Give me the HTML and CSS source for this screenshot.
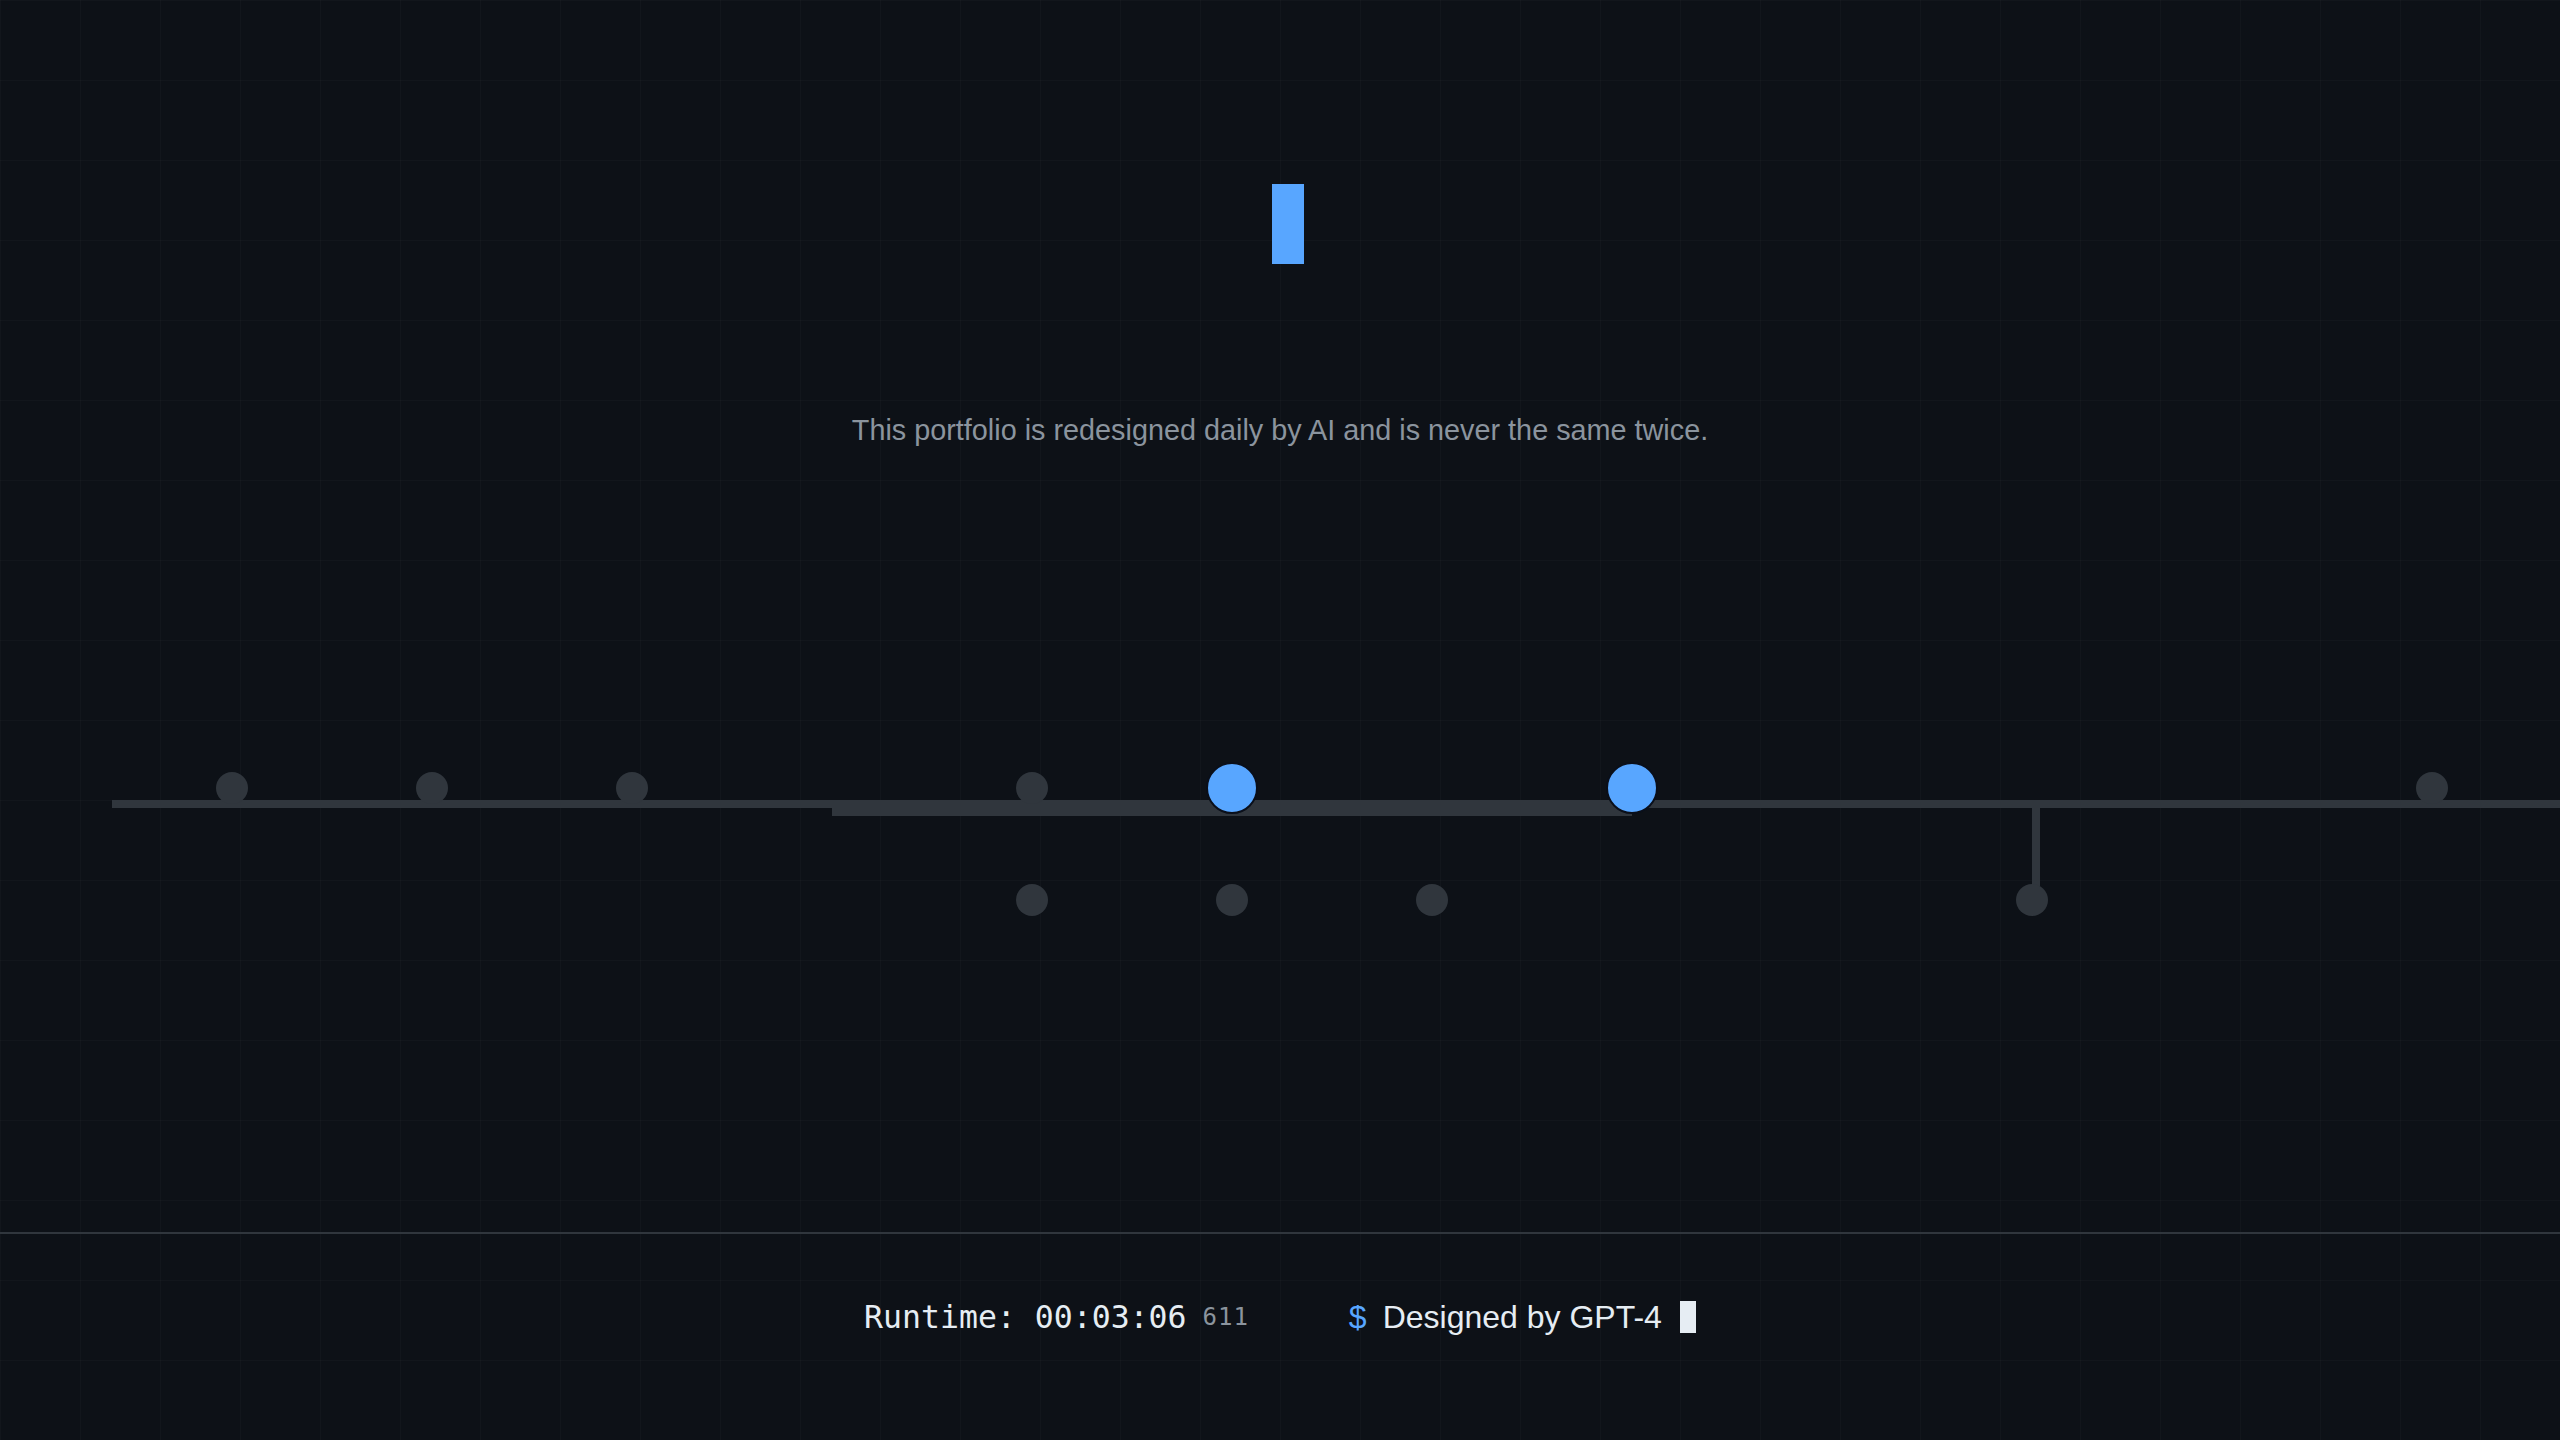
FILE: index.html
```html
<!DOCTYPE html>
<html lang="en">
<head>
<meta charset="utf-8">
<title>Portfolio</title>
<link rel="stylesheet" href="styles.css">
</head>
<body>
<main class="page">
  <header class="hero">
    <h1 class="title"><span class="title-cursor"></span></h1>
    <p class="subtitle">This portfolio is redesigned daily by AI and is never the same twice.</p>
  </header>
  <section class="timeline">
    <div class="line line-main"></div>
    <div class="line line-thick"></div>
    <div class="line line-branch"></div>
    <span class="node top c1"></span>
    <span class="node top c2"></span>
    <span class="node top c3"></span>
    <span class="node top c5"></span>
    <span class="node top c6 active"></span>
    <span class="node top c8 active"></span>
    <span class="node top c12"></span>
    <span class="node bottom c5"></span>
    <span class="node bottom c6"></span>
    <span class="node bottom c7"></span>
    <span class="node bottom c10"></span>
  </section>
</main>
<footer class="footer">
  <div class="runtime">
    <span class="runtime-time">Runtime: 00:03:06</span>
    <span class="runtime-ms">611</span>
  </div>
  <div class="credit">
    <span class="prompt">$</span>
    <span class="credit-text">Designed by GPT-4</span>
    <span class="term-cursor"></span>
  </div>
</footer>
</body>
</html>
```
FILE: styles.css
```css
* { box-sizing: border-box; }

html, body {
  margin: 0;
  padding: 0;
}

body {
  min-height: 100vh;
  display: flex;
  flex-direction: column;
  overflow: hidden;
  background-color: #0d1117;
  background-image:
    linear-gradient(rgba(255, 255, 255, 0.018) 1px, transparent 1px),
    linear-gradient(90deg, rgba(255, 255, 255, 0.018) 1px, transparent 1px);
  background-size: 80px 80px;
  font-family: "Liberation Sans", Arial, sans-serif;
  color: #e6edf3;
}

.page {
  flex: 1;
  display: flex;
  flex-direction: column;
}

.hero {
  padding-top: 184px;
  text-align: center;
}

.title {
  margin: 0;
  height: 80px;
  font-size: 80px;
  line-height: 80px;
  display: flex;
  justify-content: center;
}

.title-cursor {
  display: block;
  width: 32px;
  height: 80px;
  margin-left: 16px;
  background: #58a6ff;
}

.subtitle {
  margin: 150px 0 0;
  font-size: 28.8px;
  line-height: normal;
  color: #8b949e;
}

.timeline {
  position: relative;
  margin-top: 315px;
  padding-left: 132px;
  display: grid;
  grid-template-columns: repeat(12, 200px);
  grid-template-rows: 52px 32px;
  row-gap: 70px;
  align-items: center;
  justify-items: center;
}

.line {
  position: absolute;
  background: #30363d;
}

.line-main {
  left: 112px;
  right: 0;
  top: 38px;
  height: 8px;
}

.line-thick {
  left: 832px;
  width: 800px;
  top: 38px;
  height: 16px;
}

.line-branch {
  left: 2032px;
  width: 8px;
  top: 46px;
  height: 78px;
}

.node {
  position: relative;
  z-index: 1;
  width: 32px;
  height: 32px;
  border-radius: 50%;
  background: #30363d;
}

.node.top { grid-row: 1; }
.node.bottom { grid-row: 2; }

.node.active {
  z-index: 2;
  width: 52px;
  height: 52px;
  background: #58a6ff;
  border: 2px solid #0a0f1a;
}

.c1 { grid-column: 1; }
.c2 { grid-column: 2; }
.c3 { grid-column: 3; }
.c5 { grid-column: 5; }
.c6 { grid-column: 6; }
.c7 { grid-column: 7; }
.c8 { grid-column: 8; }
.c10 { grid-column: 10; }
.c12 { grid-column: 12; }

.footer {
  border-top: 2px solid #30363d;
  padding: 63px 0 103px;
  display: flex;
  justify-content: center;
  align-items: center;
  gap: 100px;
  line-height: 40px;
}

.runtime {
  display: flex;
  align-items: center;
  gap: 16px;
  font-family: "DejaVu Sans Mono", monospace;
}

.runtime-time {
  font-size: 31.5px;
  color: #e6edf3;
}

.runtime-ms {
  font-size: 24px;
  letter-spacing: 1px;
  color: #8b949e;
}

.credit {
  display: flex;
  align-items: center;
  font-size: 32px;
}

.prompt {
  color: #58a6ff;
  margin-right: 16px;
}

.credit-text {
  color: #e6edf3;
}

.term-cursor {
  display: block;
  width: 16px;
  height: 32px;
  margin-left: 18px;
  background: #e6edf3;
}
```
